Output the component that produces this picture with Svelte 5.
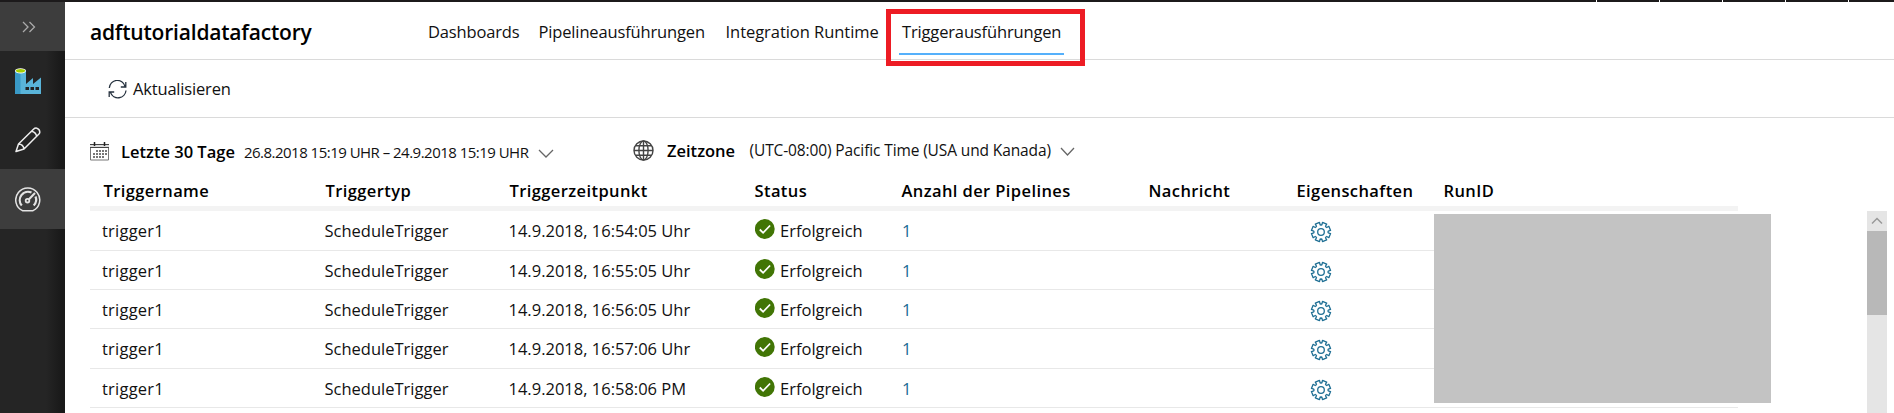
<script>
  const tabs = ['Dashboards', 'Pipelineausführungen', 'Integration Runtime', 'Triggerausführungen'];
  const activeTab = 'Triggerausführungen';
  const columns = ['Triggername', 'Triggertyp', 'Triggerzeitpunkt', 'Status', 'Anzahl der Pipelines', 'Nachricht', 'Eigenschaften', 'RunID'];
  const runs = [
    '14.9.2018, 16:54:05 Uhr',
    '14.9.2018, 16:55:05 Uhr',
    '14.9.2018, 16:56:05 Uhr',
    '14.9.2018, 16:57:06 Uhr',
    '14.9.2018, 16:58:06 PM'
  ];
  // Outline of an eight-toothed gear around (11, 11)
  const gear = Array.from({ length: 8 }, (_, i) => {
    const point = (r, deg) => {
      const a = ((i * 45 + deg) * Math.PI) / 180;
      return `${(11 + r * Math.cos(a)).toFixed(2)} ${(11 + r * Math.sin(a)).toFixed(2)}`;
    };
    return `${i ? 'L' : 'M'}${point(7, 0)}L${point(7.3, 7)}L${point(9.7, 9)}L${point(9.7, 36)}L${point(7.3, 38)}`;
  }).join('') + 'Z';
</script>

<div class="app">
  <div class="strip"><i></i><i></i><i></i><i></i><i></i></div>
  <div class="body">
    <nav class="side">
      <div class="cell expand">
        <svg width="14" height="12" viewBox="0 0 14 12"><path d="M1 1l5 5-5 5M7.500 1l5 5-5 5" fill="none" stroke="#aaa" stroke-width="1.300" /></svg>
      </div>
      <div class="cell factory">
        <svg width="26" height="27" viewBox="0 0 26 27">
          <path d="M11 26V16l7-6v6l8-6.500V26z" fill="#59b4d9" />
          <path d="M0 3h11v23H0z" fill="#3999c6" /><path d="M5.500 3H11v23H5.500z" fill="#59b4d9" />
          <ellipse cx="5.500" cy="2.800" rx="5.500" ry="2.600" fill="#fff" /><ellipse cx="5.500" cy="2.800" rx="4.600" ry="1.800" fill="#a5ce00" />
          <path d="M10.500 19h3.500v3h-3.500zM15.500 19H19v3h-3.500zM20.500 19H24v3h-3.500z" fill="#222" />
        </svg>
      </div>
      <div class="cell pencil">
        <svg width="26" height="26" viewBox="0 0 26 26" fill="none" stroke="#eee" stroke-width="1.500" stroke-linejoin="round">
          <path d="M1 24.500L3.500 17 18.500 2.300Q20 .8 21.800 1.200 24.500 2 24.800 5 24.900 6 23.700 7.300L9 22zM3.500 17q4.800 .2 5.500 5M16.500 4.300q4.200 .7 5.200 5" />
        </svg>
      </div>
      <div class="cell monitor">
        <svg width="26" height="25" viewBox="0 0 26 25" fill="none" stroke="#e4e4e4">
          <path d="M7.500 23.700A12 12 0 1 1 18 23.700z" stroke-width="1.500" />
          <path d="M6.800 18.500A8.300 8.300 0 0 1 16.500 5.500M20.500 9.500A8.300 8.300 0 0 1 18.700 18.500" stroke-width="2.200" />
          <circle cx="12.500" cy="13.700" r="1.800" stroke-width="1.800" /><path d="M14 12.300L20 6" stroke-width="2" />
        </svg>
      </div>
    </nav>
    <main>
      <header>
        <h1>adftutorialdatafactory</h1>
        <div class="tabs">
          {#each tabs as tab}
            <a class:active={tab === activeTab}>{tab}{#if tab === activeTab}<span class="callout"></span>{/if}</a>
          {/each}
        </div>
      </header>
      <div class="toolbar">
        <svg width="20" height="19" viewBox="0 0 20 19" fill="none" stroke="#26323f" stroke-width="1.300">
          <path d="M1.300 8A8 8 0 0 1 17 6.300M18 10.500A8 8 0 0 1 2.500 12.500M17.800 2v5h-5M1.200 17v-5h5" />
        </svg>
        <span>Aktualisieren</span>
      </div>
      <div class="filters">
        <svg class="calendar" width="20" height="19" viewBox="0 0 20 19">
          <path d="M.5 2.500h18v15.500H.5z" fill="#fff" stroke="#777" /><path d="M0 2h19v4H0z" fill="#ddd" /><path d="M0 2.500h19M0 5.500h19" stroke="#444" />
          <path d="M4.500 0v4M14.500 0v4" stroke="#222" stroke-width="1.500" />
          <path d="M6 9h11M3 12h14M3 15h11" stroke="#777" stroke-width="2" stroke-dasharray="2 1" />
        </svg>
        <b class="range">Letzte 30 Tage</b>
        <span class="dates">26.8.2018 15:19 UHR – 24.9.2018 15:19 UHR</span>
        <svg class="chev1" width="16" height="10" viewBox="0 0 16 10"><path d="M1 1l7 7 7-7" fill="none" stroke="#666" stroke-width="1.300" /></svg>
        <svg class="globe" width="21" height="21" viewBox="0 0 21 21" fill="none" stroke="#444" stroke-width="1.400">
          <circle cx="10.500" cy="10.500" r="9.500" /><ellipse cx="10.500" cy="10.500" rx="4.600" ry="9.500" /><path d="M10.500 1v19M1 10.500h19M2.500 5.800h16M2.500 15.200h16" />
        </svg>
        <b class="zone">Zeitzone</b>
        <span class="tz">(UTC-08:00) Pacific Time (USA und Kanada)</span>
        <svg class="chev2" width="15" height="10" viewBox="0 0 15 10"><path d="M1 1l6.500 7 6.500-7" fill="none" stroke="#666" stroke-width="1.300" /></svg>
      </div>
      <div class="content">
        <div class="table">
          <div class="grid head">{#each columns as column}<span>{column}</span>{/each}</div>
          {#each runs as time}
            <div class="grid row">
              <span class="name">trigger1</span>
              <span class="type">ScheduleTrigger</span>
              <span class="time">{time}</span>
              <span class="status">
                <svg width="20" height="20" viewBox="0 0 20 20"><circle cx="9.800" cy="10" r="9.900" fill="#417505" /><path d="M4.800 10.500l3.300 3.300 7-7.300" fill="none" stroke="#fff" stroke-width="1.800" /></svg>
                Erfolgreich
              </span>
              <a class="count">1</a>
              <span></span>
              <span class="props">
                <svg width="22" height="22" viewBox="0 0 22 22" fill="none" stroke="#1f6f94" stroke-width="1.300" stroke-linejoin="round"><path d={gear} /><circle cx="11" cy="11" r="3.300" /></svg>
              </span>
              <span></span>
            </div>
          {/each}
          <div class="redacted"></div>
        </div>
        <div class="scrollbar">
          <div class="up"><svg width="12" height="8" viewBox="0 0 12 8"><path d="M1 6.500l5-5 5 5" fill="none" stroke="#999" stroke-width="1.500" /></svg></div>
          <div class="thumb"></div>
        </div>
      </div>
    </main>
  </div>
</div>

<style>
  .app { width: 1894px; height: 413px; overflow: hidden; background: #fff; color: #111; font: 16.5px/24px "Open Sans", "Noto Sans", sans-serif; white-space: nowrap; }
  svg { display: block; flex: none; }
  .strip { height: 2px; background: #1c1a1b; display: flex; gap: 62px; padding-left: 1596px; }
  .strip i { flex: none; width: 1px; background: #fff; }
  .body { display: flex; height: 411px; }
  .side { width: 65px; flex: none; background: linear-gradient(90deg, #252525 46px, #191919 62px); }
  .cell { display: flex; box-sizing: border-box; }
  .expand { height: 49px; background: #3d3d3d; padding: 19px 0 0 22px; }
  .factory { height: 59px; padding: 17px 0 0 15px; }
  .pencil { height: 59px; padding: 17px 0 0 15px; }
  .monitor { height: 60px; padding: 18px 0 0 15px; background: #3d3d3d; }
  main { flex: 1; min-width: 0; }
  header { height: 58px; box-sizing: border-box; border-bottom: 1px solid #dadada; display: flex; padding-left: 25px; }
  h1 { margin: 0; width: 338px; font-size: 21px; font-weight: 600; line-height: 60px; color: #000; letter-spacing: -.2px; }
  .tabs { display: grid; grid-template-columns: 110.500px 187px 176.500px 165px; line-height: 60px; letter-spacing: -.15px; }
  .tabs a { position: relative; height: 51px; }
  .tabs a:nth-child(3) { letter-spacing: -.05px; }
  .tabs .active { border-bottom: 2px solid #55b0fb; padding-left: 3px; margin-left: -3px; width: 162px; }
  .callout { position: absolute; left: -13px; top: 7px; width: 189px; height: 47px; border: 5px solid #ed1c24; }
  .toolbar { height: 58px; box-sizing: border-box; border-bottom: 1px solid #dadada; display: flex; padding: 17px 0 0 43px; letter-spacing: -.18px; }
  .toolbar svg { margin: 3px 5px 0 0; }
  .filters { display: flex; height: 63px; padding: 21px 0 0 25px; box-sizing: border-box; }
  b { font-weight: 600; color: #000; }
  .calendar { margin-top: 3px; }
  .range { margin: 1px 0 0 11px; width: 123px; }
  .dates { width: 294px; font-size: 15px; letter-spacing: -.52px; margin-top: 1px; }
  .chev1 { margin-top: 10px; }
  .globe { margin: 1px 0 0 79px; }
  .zone { margin-left: 13px; width: 82.500px; }
  .tz { width: 310.500px; font-size: 15.500px; letter-spacing: -.12px; margin-top: -1px; }
  .chev2 { margin-top: 8px; }
  .content { display: flex; justify-content: space-between; padding: 0 7px 0 25px; }
  .table { position: relative; width: 1648px; }
  .grid { display: grid; grid-template-columns: 222px 184px 245px 147px 247px 148px 147px 1fr; padding-left: 12px; }
  .head { height: 30px; padding-left: 13.500px; border-bottom: 5px solid #f3f3f3; box-sizing: border-box; font-weight: 600; color: #000; letter-spacing: .4px; line-height: 20px; }
  .row { height: 39px; box-sizing: border-box; border-bottom: 1px solid #e8e8e8; line-height: 39px; }
  .row:nth-child(2), .row:nth-child(5) { height: 40px; }
  .name { letter-spacing: .22px; }
  .type, .time { padding-left: .5px; }
  .status { display: flex; gap: 5px; padding-left: 2px; }
  .status svg { margin-top: 8px; }
  .count { color: #1a6a94; padding-left: 2px; }
  .props { padding-left: 15px; }
  .props svg { margin-top: 9.500px; }
  .redacted { position: absolute; left: 1344px; top: 33px; width: 337px; height: 189px; background: #c3c3c3; }
  .scrollbar { width: 20px; height: 202px; margin-top: 30px; background: #e5e5e5; }
  .up { height: 20px; display: flex; align-items: center; justify-content: center; }
  .thumb { height: 84px; background: #b8b8b8; }
</style>
